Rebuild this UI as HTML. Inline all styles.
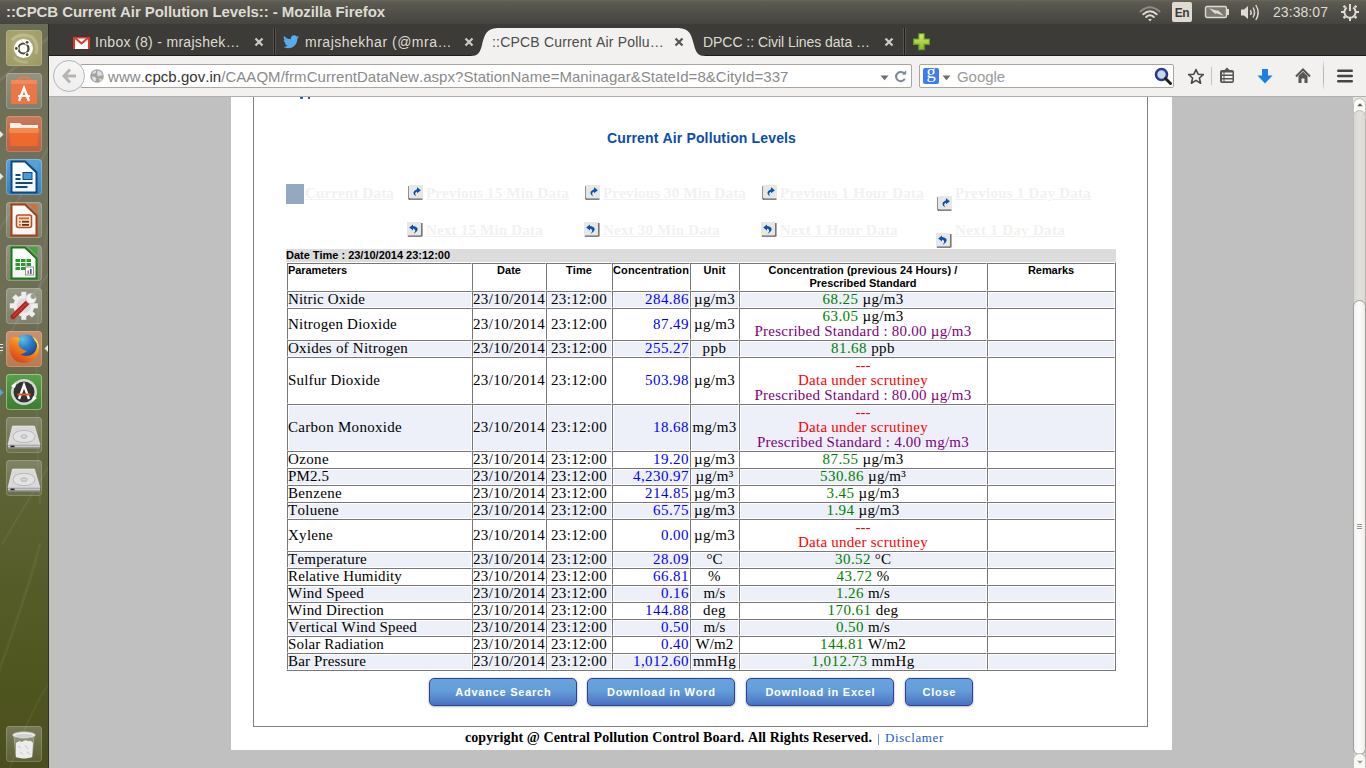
<!DOCTYPE html>
<html><head><meta charset="utf-8">
<style>
*{margin:0;padding:0;box-sizing:border-box}
html,body{width:1366px;height:768px;overflow:hidden;background:#c0c0c0;font-family:"Liberation Sans",sans-serif;position:relative;font-kerning:none}
.abs{position:absolute}
#panel{left:0;top:0;width:1366px;height:24px;background:linear-gradient(#4a4945,#3c3b37);color:#dfdbd2;font-size:15px;font-weight:bold;line-height:24px}
#launcher{left:0;top:24px;width:49px;height:744px;background:#5a5d34;border-right:1px solid #3b3d22}
#tabbar{left:49px;top:24px;width:1317px;height:31px;background:#3c3b37}
#navbar{left:49px;top:55px;width:1317px;height:42px;background:#f0efed;border-bottom:1px solid #b0ada6}
#page{left:231px;top:97px;width:941px;height:653px;background:#fff}
#box{left:253px;top:97px;width:895px;height:630px;border:1px solid #808080;border-top:0}
#scroll{left:1352px;top:97px;width:14px;height:671px;background:#dcdad5}
#title{left:607px;top:129px;color:#0a4db0;font-size:14px;font-weight:bold;line-height:18px;white-space:nowrap}
.lnk{position:absolute;font-family:"Liberation Serif",serif;font-weight:bold;font-size:15px;color:#f3f1ef;text-decoration:underline;line-height:18px;white-space:nowrap}
.ico{position:absolute;width:14px;height:14px;background:#e8e8e8}
#dtbar{left:286px;top:249px;width:830px;height:13px;background:#dcdcdc;font-size:11px;font-weight:bold;line-height:13px;padding-left:0;color:#000;white-space:nowrap}
#tbl{position:absolute;left:286px;top:262px;border-collapse:separate;border-spacing:0;table-layout:fixed;width:830px;border-style:solid;border-width:1px;border-color:#fff #777 #777 #fff}
#tbl td,#tbl th{border-style:solid;border-width:1px;border-color:#777 #fff #fff #777;padding:0;vertical-align:middle;font-family:"Liberation Serif",serif;font-size:15px;line-height:15px;white-space:nowrap;overflow:hidden;box-shadow:inset 1px 1px 0 #fff}
#tbl th{font-family:"Liberation Sans",sans-serif;font-size:11px;line-height:13px;font-weight:bold;vertical-align:top;text-align:center;height:28px}
#tbl tr.b td{background:#edf0f8}
#tbl td.c{text-align:center}
#tbl td.v{text-align:right;color:#00f}
.g{color:#008000}.r{color:#f00}.p{color:#800080}
.btn{position:absolute;top:678px;height:28px;border:1px solid #2c3f9e;border-radius:5px;box-shadow:0 0 2px rgba(60,50,30,0.3),0 1px 2px rgba(60,50,30,0.25);background:linear-gradient(#69a3dc 0%,#649ed9 45%,#4b72c0 100%);color:#fff;font-size:11px;font-weight:bold;letter-spacing:0.75px;text-indent:0.75px;text-align:center;line-height:26px}
#foot{left:465px;top:729px;font-family:"Liberation Serif",serif;font-size:14px;line-height:18px;white-space:nowrap}
</style></head><body>
<!-- top panel -->
<div class="abs" style="left:0;top:0;width:1366px;height:24px;background:linear-gradient(#6a685c 0px,#5d5b52 2px,#504f49 12px,#45443f 24px)"></div>
<div class="abs" style="left:6px;top:3px;color:#dfdbd2;font-size:15px;font-weight:bold;line-height:18px;white-space:nowrap"><span style="letter-spacing:-0.064px">::CPCB Current Air Pollution Levels:: - Mozilla Firefox</span></div>
<svg class="abs" style="left:1138px;top:4px" width="24" height="18" viewBox="0 0 24 18">
 <path d="M2.5 7.5 Q12 -1 21.5 7.5" stroke="#8d8b84" stroke-width="2" fill="none" stroke-linecap="round"/>
 <path d="M5.3 10.3 Q12 4.2 18.7 10.3" stroke="#dfdbd2" stroke-width="2" fill="none" stroke-linecap="round"/>
 <path d="M8.2 13 Q12 9.6 15.8 13" stroke="#dfdbd2" stroke-width="2" fill="none" stroke-linecap="round"/>
 <path d="M10 15 L14 15 L12 17.5 Z" fill="#dfdbd2"/>
</svg>
<div class="abs" style="left:1172px;top:2px;width:20px;height:20px;background:#dfdbd2;border-radius:2px;color:#3c3b37;font-size:12px;line-height:22px;text-align:center;letter-spacing:-0.5px;font-weight:bold">En</div>
<svg class="abs" style="left:1204px;top:5px" width="26" height="14" viewBox="0 0 26 14">
 <rect x="1.5" y="1.5" width="21" height="11" rx="1.5" fill="#7b7a72" stroke="#dfdbd2" stroke-width="1.4"/>
 <rect x="22.5" y="4" width="2.5" height="6" fill="#dfdbd2"/>
 <path d="M5.2 3.2 L13.8 6 L13 4.2 L19.8 10.8 L11.2 8 L12 9.8 Z" fill="#dfdbd2"/>
</svg>
<svg class="abs" style="left:1240px;top:3px" width="22" height="19" viewBox="0 0 22 19">
 <path d="M1 6.5 L4 6.5 L8 3 L8 16 L4 12.5 L1 12.5 Z" fill="#dfdbd2"/>
 <path d="M10.5 7 Q12 9.5 10.5 12" stroke="#dfdbd2" stroke-width="1.4" fill="none"/>
 <path d="M13 4.5 Q16 9.5 13 14.5" stroke="#dfdbd2" stroke-width="1.4" fill="none"/>
 <path d="M15.8 2 Q20.5 9.5 15.8 17" stroke="#dfdbd2" stroke-width="1.4" fill="none"/>
</svg>
<div class="abs" style="left:1273px;top:4px;color:#dfdbd2;font-size:14px;line-height:16px;white-space:nowrap"><span style="letter-spacing:0.063px">23:38:07</span></div>
<svg class="abs" style="left:1341px;top:3px" width="18" height="18" viewBox="0 0 18 18">
 <g fill="#dfdbd2">
 <rect x="8" y="15" width="2" height="3"/><rect x="0" y="8" width="3" height="2"/><rect x="15" y="8" width="3" height="2"/>
 <rect x="2.2" y="2.4" width="2.4" height="2.4" transform="rotate(45 3.4 3.6)"/><rect x="13.4" y="2.4" width="2.4" height="2.4" transform="rotate(45 14.6 3.6)"/>
 <rect x="2.2" y="13" width="2.4" height="2.4" transform="rotate(45 3.4 14.2)"/><rect x="13.4" y="13" width="2.4" height="2.4" transform="rotate(45 14.6 14.2)"/>
 <rect x="8" y="1" width="2" height="7"/>
 </g>
 <path d="M5.8 4.5 A5.6 5.6 0 1 0 12.2 4.5" stroke="#dfdbd2" stroke-width="2" fill="none"/>
</svg>

<!-- launcher -->
<div class="abs" style="left:0;top:24px;width:48px;height:744px;background:linear-gradient(#6c6d55 0px,#707159 150px,#6c6d52 300px,#63673f 420px,#5a6030 500px,#50561f 650px,#4a4e1f 744px)"></div>
<svg class="abs" style="left:0;top:24px" width="48" height="744" viewBox="0 0 48 744">
 <g fill="none" stroke="#fff" stroke-linecap="round">
  <path d="M-5 60 Q20 40 52 10" stroke-opacity="0.08" stroke-width="3"/>
  <path d="M-4 210 Q24 170 50 120" stroke-opacity="0.07" stroke-width="2"/>
  <path d="M0 330 Q18 290 48 250" stroke-opacity="0.08" stroke-width="2"/>
  <path d="M40 480 Q30 300 48 200" stroke-opacity="0.05" stroke-width="2"/>
  <path d="M2 520 Q26 480 50 440" stroke-opacity="0.06" stroke-width="2"/>
  <path d="M-2 650 Q30 560 40 520" stroke-opacity="0.05" stroke-width="3"/>
  <path d="M10 744 Q24 700 48 660" stroke-opacity="0.05" stroke-width="2"/>
 </g>
</svg>
<div class="abs" style="left:48px;top:24px;width:1px;height:744px;background:#2e2f1e"></div>
<div class="abs" style="left:6px;top:30px;width:36px;height:36px;border-radius:4px;background:radial-gradient(circle at 45% 40%,#b9b683 0,#a7a36f 45%,#9a965f 100%);box-shadow:inset 0 0 0 1px rgba(255,255,255,0.18)"></div><svg class="abs" style="left:6px;top:30px" width="36" height="36" viewBox="0 0 36 36"><path d="M6 10 Q14 2 26 7 Q33 14 30 24" stroke="rgba(255,255,255,0.22)" stroke-width="3" fill="none"/><path d="M8 27 Q12 33 22 32" stroke="rgba(255,255,255,0.18)" stroke-width="3" fill="none"/><circle cx="17.5" cy="18.5" r="9.4" fill="#fff"/><circle cx="17.5" cy="18.5" r="5" stroke="#4d4930" stroke-width="2.2" fill="none"/><circle cx="21.1" cy="12.3" r="2.5" fill="#fff"/><circle cx="10.3" cy="18.5" r="2.5" fill="#fff"/><circle cx="21.1" cy="24.7" r="2.5" fill="#fff"/><circle cx="21.1" cy="12.3" r="1.4" fill="#4d4930"/><circle cx="10.3" cy="18.5" r="1.4" fill="#4d4930"/><circle cx="21.1" cy="24.7" r="1.4" fill="#4d4930"/></svg>
<div class="abs" style="left:6px;top:73px;width:36px;height:36px;border-radius:4px;background:linear-gradient(rgba(255,255,255,0.26),rgba(255,255,255,0.12));box-shadow:inset 0 0 0 1px rgba(255,255,255,0.18)"></div><svg class="abs" style="left:6px;top:73px" width="36" height="36" viewBox="0 0 36 36"><path d="M12 8 Q12 4.5 18 4.5 Q24 4.5 24 8" stroke="#e77a4e" stroke-width="2.2" fill="none"/><rect x="5" y="7" width="26" height="24" fill="#ed7443"/><rect x="5" y="7" width="26" height="4" fill="#f08a5c"/><path d="M13 28 L18 15 L23 28" stroke="#fff" stroke-width="2.4" fill="none"/><rect x="12" y="22" width="12" height="2" fill="#fff"/></svg>
<div class="abs" style="left:6px;top:116px;width:36px;height:36px;border-radius:4px;background:linear-gradient(#c77a5a,#b7603f);box-shadow:inset 0 0 0 1px rgba(255,255,255,0.18)"></div><svg class="abs" style="left:6px;top:116px" width="36" height="36" viewBox="0 0 36 36"><path d="M4 7 L14 7 L16 9 L32 9 L32 14 L4 14 Z" fill="#f5efe8"/><path d="M3 12 L33 12 L31.5 30 L4.5 30 Z" fill="#ee6a2c"/><path d="M3 12 L33 12 L32.5 17 L3.5 17 Z" fill="#f5884c"/></svg>
<div class="abs" style="left:6px;top:159px;width:36px;height:36px;border-radius:4px;background:linear-gradient(#5aa0d6,#3b7fba);box-shadow:inset 0 0 0 1px rgba(255,255,255,0.25)"></div><svg class="abs" style="left:6px;top:159px" width="36" height="36" viewBox="0 0 36 36"><path d="M5.5 2.5 L19 2.5 L30.5 13.5 L30.5 33.5 L5.5 33.5 Z" fill="#f6f6f6" stroke="#0c4a80" stroke-width="2"/><path d="M7 4 L18.5 4 L29 14 L29 19 Q17 16 7 19 Z" fill="#fff" opacity="0.7"/><path d="M22.5 2 L31.5 2 L31.5 10.5 Z" fill="#5a9fd8"/><rect x="9.5" y="15" width="5" height="2" fill="#0c4a80"/><rect x="9.5" y="19" width="5" height="2" fill="#0c4a80"/><rect x="9.5" y="23" width="17" height="2" fill="#0c4a80"/><rect x="9.5" y="27" width="12" height="2" fill="#0c4a80"/><rect x="16.5" y="13" width="10" height="8" fill="#0c4a80"/><rect x="17.5" y="14" width="8" height="6" fill="#4a9ad8"/></svg>
<div class="abs" style="left:6px;top:202px;width:36px;height:36px;border-radius:4px;background:linear-gradient(rgba(255,255,255,0.26),rgba(255,255,255,0.12));box-shadow:inset 0 0 0 1px rgba(255,255,255,0.18)"></div><svg class="abs" style="left:6px;top:202px" width="36" height="36" viewBox="0 0 36 36"><path d="M5.5 2.5 L19 2.5 L30.5 13.5 L30.5 33.5 L5.5 33.5 Z" fill="#f6f6f6" stroke="#a63f14" stroke-width="2"/><path d="M7 4 L18.5 4 L29 14 L29 19 Q17 16 7 19 Z" fill="#fff" opacity="0.7"/><path d="M22.5 2 L31.5 2 L31.5 10.5 Z" fill="#d0703c"/><rect x="10.5" y="13" width="15" height="12.5" rx="2" fill="#fde6d4" stroke="#b5501e" stroke-width="1.6"/><rect x="13" y="15.5" width="10" height="1.8" fill="#d9601e"/><rect x="13" y="18.8" width="1.8" height="1.8" fill="#d9601e"/><rect x="16" y="18.8" width="7" height="1.8" fill="#7a2a08"/><rect x="13" y="22" width="1.8" height="1.8" fill="#d9601e"/><rect x="16" y="22" width="7" height="1.8" fill="#7a2a08"/></svg>
<div class="abs" style="left:6px;top:245px;width:36px;height:36px;border-radius:4px;background:linear-gradient(rgba(255,255,255,0.26),rgba(255,255,255,0.12));box-shadow:inset 0 0 0 1px rgba(255,255,255,0.18)"></div><svg class="abs" style="left:6px;top:245px" width="36" height="36" viewBox="0 0 36 36"><path d="M5.5 2.5 L19 2.5 L30.5 13.5 L30.5 33.5 L5.5 33.5 Z" fill="#f6f6f6" stroke="#187a18" stroke-width="2"/><path d="M7 4 L18.5 4 L29 14 L29 19 Q17 16 7 19 Z" fill="#fff" opacity="0.7"/><path d="M22.5 2 L31.5 2 L31.5 10.5 Z" fill="#3aaa3a"/><g fill="#2a9a2a"><rect x="9.5" y="14" width="4.5" height="3"/><rect x="15" y="14" width="4.5" height="3"/><rect x="20.5" y="14" width="4.5" height="3"/><rect x="9.5" y="18" width="4.5" height="3"/><rect x="15" y="18" width="4.5" height="3"/><rect x="20.5" y="18" width="4.5" height="3"/><rect x="9.5" y="22" width="4.5" height="3"/><rect x="15" y="22" width="4.5" height="3"/></g><rect x="19.5" y="22" width="8" height="8" fill="#fff" stroke="#777" stroke-width="0.8"/><rect x="21.5" y="25.5" width="1.6" height="3.5" fill="#e06020"/><rect x="24" y="24" width="1.6" height="5" fill="#2060c0"/></svg>
<div class="abs" style="left:6px;top:288px;width:36px;height:36px;border-radius:4px;background:linear-gradient(rgba(255,255,255,0.28),rgba(255,255,255,0.14));box-shadow:inset 0 0 0 1px rgba(255,255,255,0.18)"></div><svg class="abs" style="left:6px;top:288px" width="36" height="36" viewBox="0 0 36 36"><g fill="#ededed"><rect x="15.3" y="3.8" width="5" height="5" transform="rotate(0 17.8 17.8)"/><rect x="15.3" y="3.8" width="5" height="5" transform="rotate(45 17.8 17.8)"/><rect x="15.3" y="3.8" width="5" height="5" transform="rotate(90 17.8 17.8)"/><rect x="15.3" y="3.8" width="5" height="5" transform="rotate(135 17.8 17.8)"/><rect x="15.3" y="3.8" width="5" height="5" transform="rotate(180 17.8 17.8)"/><rect x="15.3" y="3.8" width="5" height="5" transform="rotate(225 17.8 17.8)"/><rect x="15.3" y="3.8" width="5" height="5" transform="rotate(270 17.8 17.8)"/><rect x="15.3" y="3.8" width="5" height="5" transform="rotate(315 17.8 17.8)"/><circle cx="17.8" cy="17.8" r="10.5"/></g><circle cx="17.8" cy="17.8" r="7.2" fill="#dadada"/><path d="M7 28.6 L21 15" stroke="#b02420" stroke-width="5.2" stroke-linecap="round"/><path d="M7.5 28 L20.5 15.5" stroke="#e04a40" stroke-width="1.6" stroke-linecap="round" opacity="0.6"/><circle cx="25" cy="10.5" r="5.2" fill="#f2f2f2" stroke="#bbb" stroke-width="0.6"/><circle cx="27.2" cy="8.3" r="2.6" fill="#9c9e8a"/></svg>
<div class="abs" style="left:6px;top:331px;width:36px;height:36px;border-radius:4px;background:linear-gradient(#c9936e,#b87a52);box-shadow:inset 0 0 0 1px rgba(255,255,255,0.18)"></div><svg class="abs" style="left:6px;top:331px" width="36" height="36" viewBox="0 0 36 36"><defs><radialGradient id="glb" cx="0.35" cy="0.2" r="0.9"><stop offset="0" stop-color="#5cc4f0"/><stop offset="0.45" stop-color="#2f7fc8"/><stop offset="1" stop-color="#1a3a88"/></radialGradient><linearGradient id="fox" x1="0.8" y1="0.2" x2="0.3" y2="1"><stop offset="0" stop-color="#ffd02a"/><stop offset="0.35" stop-color="#f58a1c"/><stop offset="1" stop-color="#d9401a"/></linearGradient></defs><circle cx="20" cy="14.5" r="11" fill="url(#glb)"/><path d="M5 7 C8 6 12 5.5 14.5 7.5 C12.5 10 12 13 13 15 C15 18 18 19.5 21 20 C19 22 16 23 14.5 23.5 C18 25.5 23 25.5 27 23 C30.5 20.5 31.5 16 31 12.5 C30 9 28 6.5 26 5.5 C30 7 33 11 32.7 17.5 C32.5 26 26 32 18 32 C10 32 3.5 26 3.5 17 C3.5 13 4 9.5 5 7 Z" fill="url(#fox)"/><path d="M26 5.5 C30 7 33 11 32.7 17.5 C32 14 31 12 29 10 C28.5 8.5 27.5 7 26 5.5 Z" fill="#ffe04a"/></svg>
<div class="abs" style="left:6px;top:374px;width:36px;height:36px;border-radius:4px;background:linear-gradient(#5aa048,#3e7c30);box-shadow:inset 0 0 0 1px rgba(230,230,200,0.5)"></div><svg class="abs" style="left:6px;top:374px" width="36" height="36" viewBox="0 0 36 36"><circle cx="18" cy="18" r="13" fill="#d8d8d8"/><circle cx="18" cy="18" r="10.5" fill="#333"/><path d="M13 25 L18 11 L23 25" stroke="#fff" stroke-width="2.4" fill="none"/><rect x="11.5" y="19.5" width="13" height="2" fill="#e05a28"/><path d="M5 12 L10 8 L9 14 Z M31 24 L26 28 L27 22 Z" fill="#fff"/></svg>
<div class="abs" style="left:6px;top:417px;width:36px;height:36px;border-radius:4px;background:linear-gradient(rgba(255,255,255,0.2),rgba(255,255,255,0.08));box-shadow:inset 0 0 0 1px rgba(255,255,255,0.18)"></div><svg class="abs" style="left:6px;top:417px" width="36" height="36" viewBox="0 0 36 36"><path d="M6.5 9 L28.5 9 L34 27.8 L2 27.8 Z" fill="#d9d9d9" stroke="#f4f4f4" stroke-width="0.6"/><ellipse cx="18" cy="19.5" rx="11" ry="6.2" stroke="#b4b4b4" stroke-width="0.9" fill="#e2e2e2"/><ellipse cx="18" cy="19.5" rx="3.2" ry="1.8" stroke="#aaa" stroke-width="0.8" fill="#d6d6d6"/><path d="M2 27.8 L34 27.8 L34 31.5 L2 31.5 Z" fill="#9a9a9a"/><path d="M2 28.6 L34 28.6 L34 30 L2 30 Z" fill="#c8c8c8"/><rect x="4.5" y="28.6" width="4" height="1.6" fill="#222"/></svg>
<div class="abs" style="left:6px;top:460px;width:36px;height:36px;border-radius:4px;background:linear-gradient(rgba(255,255,255,0.2),rgba(255,255,255,0.08));box-shadow:inset 0 0 0 1px rgba(255,255,255,0.18)"></div><svg class="abs" style="left:6px;top:460px" width="36" height="36" viewBox="0 0 36 36"><path d="M6.5 9 L28.5 9 L34 27.8 L2 27.8 Z" fill="#d9d9d9" stroke="#f4f4f4" stroke-width="0.6"/><ellipse cx="18" cy="19.5" rx="11" ry="6.2" stroke="#b4b4b4" stroke-width="0.9" fill="#e2e2e2"/><ellipse cx="18" cy="19.5" rx="3.2" ry="1.8" stroke="#aaa" stroke-width="0.8" fill="#d6d6d6"/><path d="M2 27.8 L34 27.8 L34 31.5 L2 31.5 Z" fill="#9a9a9a"/><path d="M2 28.6 L34 28.6 L34 30 L2 30 Z" fill="#c8c8c8"/><rect x="4.5" y="28.6" width="4" height="1.6" fill="#222"/></svg>
<div class="abs" style="left:6px;top:726px;width:36px;height:36px;border-radius:4px;background:linear-gradient(rgba(255,255,255,0.24),rgba(255,255,255,0.1));box-shadow:inset 0 0 0 1px rgba(255,255,255,0.18)"></div><svg class="abs" style="left:6px;top:726px" width="36" height="36" viewBox="0 0 36 36"><path d="M8 10 L10 31 Q18 34 26 31 L28 10 Z" fill="rgba(255,255,255,0.22)" stroke="rgba(255,255,255,0.4)" stroke-width="0.8"/><path d="M10 17 Q13 14 16 16 Q19 13 22 15 Q25 14 27 17 L26 31 Q18 33.5 10 31 Z" fill="#ececec"/><path d="M12 20 L15 22 M19 19 L22 23 M14 26 L17 28 M21 26 L24 28" stroke="#bbb" stroke-width="0.8"/><ellipse cx="18" cy="9" rx="11.5" ry="3.2" fill="#f0f0f0" stroke="#aaa" stroke-width="0.8"/><ellipse cx="18" cy="9.6" rx="9" ry="1.8" fill="#d0d0d0"/></svg>
<svg class="abs" style="left:0;top:131px" width="4" height="7"><path d="M0 0 L3.5 3.5 L0 7 Z" fill="#e6e6e6"/></svg>
<svg class="abs" style="left:0;top:173px" width="4" height="7"><path d="M0 0 L3.5 3.5 L0 7 Z" fill="#e6e6e6"/></svg>
<div class="abs" style="left:0;top:344px;width:3px;height:1px;background:#e6e6e6;box-shadow:0 3px 0 #e6e6e6,0 6px 0 #e6e6e6"></div>
<svg class="abs" style="left:44px;top:345px" width="4" height="7"><path d="M4 0 L0.5 3.5 L4 7 Z" fill="#e6e6e6"/></svg>
<svg class="abs" style="left:0;top:389px" width="4" height="7"><path d="M0 0 L3.5 3.5 L0 7 Z" fill="#4aa8e0"/></svg>

<!-- tab bar -->
<div class="abs" style="left:49px;top:24px;width:1317px;height:31px;background:#3c3b37"></div>
<div class="abs" style="left:49px;top:55px;width:1317px;height:1px;background:#1e1d1b"></div>
<!-- tab separators -->
<div class="abs" style="left:273px;top:28px;width:3px;height:27px;background:linear-gradient(90deg,#55544f 0,#55544f 33%,#1e1d1b 33%,#1e1d1b 66%,#55544f 66%)"></div>
<div class="abs" style="left:903px;top:28px;width:3px;height:27px;background:linear-gradient(90deg,#55544f 0,#55544f 33%,#1e1d1b 33%,#1e1d1b 66%,#55544f 66%)"></div>
<!-- active tab -->
<svg class="abs" style="left:470px;top:27px" width="236" height="29" viewBox="0 0 236 29">
 <path d="M0 29 C8 29 10 26 12 18 C15 6 17 1 30 1 L206 1 C219 1 221 6 224 18 C226 26 228 29 236 29 Z" fill="#f2f1f0"/>
</svg>
<!-- gmail icon -->
<svg class="abs" style="left:73px;top:37px" width="17" height="12" viewBox="0 0 17 12">
 <rect x="0" y="0" width="17" height="12" fill="#e0342c"/>
 <rect x="2" y="1.5" width="13" height="10.5" fill="#fff"/>
 <path d="M1.5 0.5 L8.5 6.5 L15.5 0.5" stroke="#e0342c" stroke-width="2" fill="none"/>
</svg>
<div class="abs" style="left:95px;top:34px;color:#dfdbd2;font-size:14px;line-height:17px;white-space:nowrap"><span style="letter-spacing:0.310px">Inbox (8) - mrajshek…</span></div>
<svg class="abs tabx" style="left:254px;top:37px" width="10" height="10" viewBox="0 0 10 10"><path d="M1.5 1.5 L8.5 8.5 M8.5 1.5 L1.5 8.5" stroke="#cfccc5" stroke-width="2.2"/></svg>
<!-- twitter icon -->
<svg class="abs" style="left:283px;top:35px" width="16" height="14" viewBox="0 0 24 20">
 <path d="M24 2.4c-.9.4-1.8.6-2.8.8 1-.6 1.8-1.6 2.2-2.7-1 .6-2 1-3.1 1.2C19.4.7 18.1 0 16.6 0c-2.7 0-4.9 2.2-4.9 4.9 0 .4 0 .8.1 1.1C7.7 5.8 4.1 3.9 1.7.9c-.4.7-.7 1.6-.7 2.5 0 1.7.9 3.2 2.2 4.1-.8 0-1.6-.2-2.2-.6v.1c0 2.4 1.7 4.4 3.9 4.8-.4.1-.8.2-1.3.2-.3 0-.6 0-.9-.1.6 2 2.4 3.4 4.6 3.4-1.7 1.3-3.8 2.1-6.1 2.1-.4 0-.8 0-1.2-.1 2.2 1.4 4.8 2.2 7.5 2.2 9.1 0 14-7.5 14-14v-.6c1-.7 1.8-1.6 2.5-2.5z" fill="#55acee"/>
</svg>
<div class="abs" style="left:305px;top:34px;color:#dfdbd2;font-size:14px;line-height:17px;white-space:nowrap"><span style="letter-spacing:0.505px">mrajshekhar (@mra…</span></div>
<svg class="abs" style="left:464px;top:37px" width="10" height="10" viewBox="0 0 10 10"><path d="M1.5 1.5 L8.5 8.5 M8.5 1.5 L1.5 8.5" stroke="#cfccc5" stroke-width="2.2"/></svg>
<div class="abs" style="left:492px;top:34px;color:#4c4c4a;font-size:14px;line-height:17px;white-space:nowrap"><span style="letter-spacing:0.189px">::CPCB Current Air Pollu…</span></div>
<svg class="abs" style="left:674px;top:37px" width="10" height="10" viewBox="0 0 10 10"><path d="M1.5 1.5 L8.5 8.5 M8.5 1.5 L1.5 8.5" stroke="#555" stroke-width="2.2"/></svg>
<div class="abs" style="left:703px;top:34px;color:#dfdbd2;font-size:14px;line-height:17px;white-space:nowrap"><span style="letter-spacing:-0.041px">DPCC :: Civil Lines data …</span></div>
<svg class="abs" style="left:884px;top:37px" width="10" height="10" viewBox="0 0 10 10"><path d="M1.5 1.5 L8.5 8.5 M8.5 1.5 L1.5 8.5" stroke="#cfccc5" stroke-width="2.2"/></svg>
<!-- new tab plus -->
<svg class="abs" style="left:913px;top:33px" width="18" height="18" viewBox="0 0 18 18">
 <defs><linearGradient id="plg" x1="0" y1="0" x2="0" y2="1"><stop offset="0" stop-color="#d8ec60"/><stop offset="1" stop-color="#8ab82a"/></linearGradient></defs>
 <path d="M5.8 0.8 L11.2 0.8 L11.2 6 L16.4 6 L16.4 11.4 L11.2 11.4 L11.2 16.6 L5.8 16.6 L5.8 11.4 L0.6 11.4 L0.6 6 L5.8 6 Z" fill="url(#plg)" stroke="#5da02a" stroke-width="1.1"/>
</svg>
<!-- nav bar -->
<div class="abs" style="left:49px;top:56px;width:1317px;height:40px;background:#f2f1f0"></div>
<div class="abs" style="left:49px;top:96px;width:1317px;height:1px;background:#b3afa8"></div>
<!-- url bar -->
<div class="abs" style="left:80px;top:64px;width:832px;height:24px;background:#fff;border:1px solid #aaa59d;border-radius:2px"></div>
<div class="abs" style="left:53px;top:60px;width:32px;height:32px;border-radius:50%;background:linear-gradient(#f7f6f5,#efeeec);border:1px solid #a9b7c6"></div>
<svg class="abs" style="left:62px;top:68px" width="15" height="16" viewBox="0 0 15 16">
 <path d="M8 1.5 L2 8 L8 14.5 M2.5 8 L14 8" stroke="#b5b5b5" stroke-width="3" fill="none" stroke-linejoin="miter"/>
</svg>
<svg class="abs" style="left:90px;top:69px" width="14" height="14" viewBox="0 0 14 14">
 <circle cx="7" cy="7" r="6.8" fill="#a2a2a2"/>
 <path d="M2 4.5 Q3.5 1.6 6.2 1.2 L6 3.6 Q4.2 5.4 2 4.5 Z M7.6 1.4 Q11.5 2 12.8 6.2 L11 6.8 Q9.6 5.8 8.8 7.4 Q6.8 7 7.2 4.6 Z M2.2 7.6 Q5 7 6.4 9.2 Q6.2 12 4.6 12.6 Q1.6 10.8 2.2 7.6 Z M9.2 9.6 Q11 9 12 10.6 L10 12.8 Q9.4 11 9.2 9.6 Z" fill="#dedede"/>
</svg>
<div class="abs" style="left:108px;top:68px;font-size:15px;line-height:18px;white-space:nowrap;color:#8a8a8a"><span style="letter-spacing:0.044px">www.<span style="color:#333">cpcb.gov.in</span>/CAAQM/frmCurrentDataNew.aspx?StationName=Maninagar&amp;StateId=8&amp;CityId=337</span></div>
<svg class="abs" style="left:880px;top:75px" width="9" height="6" viewBox="0 0 9 6"><path d="M0.5 0.5 L8.5 0.5 L4.5 5.3 Z" fill="#6c6c6c"/></svg>
<svg class="abs" style="left:894px;top:69px" width="14" height="14" viewBox="0 0 14 14">
 <path d="M10.6 5.2 A4.6 4.6 0 1 0 10.8 9.6" stroke="#7d8a96" stroke-width="2.1" fill="none"/>
 <path d="M8 5.6 L12.2 5.6 L12.2 1.2 Z" fill="#7d8a96"/>
</svg>
<!-- search box -->
<div class="abs" style="left:919px;top:64px;width:255px;height:24px;background:#fff;border:1px solid #aaa59d;border-radius:2px"></div>
<svg class="abs" style="left:923px;top:68px" width="16" height="16" viewBox="0 0 16 16"><rect width="16" height="16" rx="2" fill="#3d7cf2"/><text x="8.2" y="10.4" text-anchor="middle" font-family="Liberation Serif" font-size="18.5" fill="#fff">g</text></svg>
<svg class="abs" style="left:942px;top:75px" width="9" height="6" viewBox="0 0 9 6"><path d="M0.5 0.5 L8.5 0.5 L4.5 5.3 Z" fill="#6c6c6c"/></svg>
<div class="abs" style="left:957px;top:68px;font-size:15px;line-height:18px;color:#9a9a9a;white-space:nowrap"><span style="letter-spacing:-0.062px">Google</span></div>
<svg class="abs" style="left:1154px;top:67px" width="18" height="18" viewBox="0 0 18 18">
 <circle cx="7.5" cy="7.5" r="5.5" stroke="#2a3b8f" stroke-width="2.6" fill="#c8d8f0"/>
 <path d="M11.5 11.5 L16.5 16.5" stroke="#222" stroke-width="3" stroke-linecap="round"/>
</svg>
<!-- right toolbar icons -->
<svg class="abs" style="left:1187px;top:68px" width="18" height="17" viewBox="0 0 18 17">
 <path d="M9 1.5 L11.1 6.2 L16.3 6.6 L12.4 10 L13.6 15.2 L9 12.4 L4.4 15.2 L5.6 10 L1.7 6.6 L6.9 6.2 Z" stroke="#4a4a4a" stroke-width="1.6" fill="none" stroke-linejoin="round"/>
</svg>
<div class="abs" style="left:1211px;top:67px;width:1px;height:18px;background:#c5c2bc"></div>
<svg class="abs" style="left:1219px;top:67px" width="16" height="17" viewBox="0 0 16 17">
 <path d="M8 0.5 L10.5 3 L5.5 3 Z" fill="#555"/>
 <rect x="1" y="3" width="14" height="13" rx="2" fill="#555"/>
 <rect x="5.5" y="5.5" width="8" height="2" fill="#f2f1f0"/><rect x="5.5" y="9" width="8" height="2" fill="#f2f1f0"/><rect x="5.5" y="12.5" width="8" height="1.8" fill="#f2f1f0"/>
 <rect x="3" y="5.5" width="1.5" height="2" fill="#f2f1f0"/><rect x="3" y="9" width="1.5" height="2" fill="#f2f1f0"/><rect x="3" y="12.5" width="1.5" height="1.8" fill="#f2f1f0"/>
</svg>
<svg class="abs" style="left:1257px;top:69px" width="16" height="15" viewBox="0 0 16 15">
 <path d="M5 0 L11 0 L11 6.5 L15.5 6.5 L8 14.5 L0.5 6.5 L5 6.5 Z" fill="#1a7fe6"/>
</svg>
<svg class="abs" style="left:1295px;top:68px" width="16" height="16" viewBox="0 0 16 16">
 <path d="M1 8.5 L8 1.5 L15 8.5" stroke="#555" stroke-width="2" fill="none"/>
 <path d="M3.5 8 L8 3.8 L12.5 8 L12.5 15 L9.5 15 L9.5 10.5 L6.5 10.5 L6.5 15 L3.5 15 Z" fill="#555"/>
</svg>
<div class="abs" style="left:1323px;top:59px;width:1px;height:32px;background:linear-gradient(rgba(180,190,200,0),#b0bac4 30%,#b0bac4 70%,rgba(180,190,200,0))"></div>
<svg class="abs" style="left:1336px;top:68px" width="18" height="16" viewBox="0 0 18 16">
 <rect x="1" y="1.5" width="16" height="2.4" rx="1.2" fill="#444"/><rect x="1" y="6.8" width="16" height="2.4" rx="1.2" fill="#444"/><rect x="1" y="12.1" width="16" height="2.4" rx="1.2" fill="#444"/>
</svg>

<!-- content background -->
<div class="abs" style="left:49px;top:97px;width:1303px;height:671px;background:#c0c0c0"></div>
<!-- scrollbar -->
<div class="abs" style="left:1353px;top:97px;width:13px;height:671px;background:#e6e4e1"></div>
<div class="abs" style="left:1353px;top:98px;width:13px;height:16px;border-radius:6.5px 6.5px 0 0;background:#fbfbfa;border:1px solid #c2beb7;border-bottom:0"></div>
<div class="abs" style="left:1353px;top:110px;width:13px;height:664px;border-radius:6.5px;background:linear-gradient(90deg,#d9d7d3,#e2e0dd 50%,#dad8d4);border:1px solid #bfbbb4"></div>
<svg class="abs" style="left:1356px;top:102px" width="8" height="5" viewBox="0 0 8 5"><path d="M1.2 4.3 L6.8 4.3 L4 1.3 Z" fill="#5a5a5a"/></svg>
<div class="abs" style="left:1353px;top:300px;width:13px;height:455px;border-radius:6.5px;background:linear-gradient(90deg,#f3f3f2,#fdfdfd 45%,#eeedeb);border:1px solid #a29e97"></div>
<div class="abs" style="left:1357px;top:524px;width:5px;height:1px;background:#9a9791;box-shadow:0 2px 0 #9a9791,0 4px 0 #9a9791"></div>
<div class="abs" style="left:1353px;top:753px;width:13px;height:16px;border-radius:6.5px 6.5px 0 0;background:#f8f8f7;border:1px solid #c2beb7;border-bottom:0"></div>
<svg class="abs" style="left:1356px;top:760px" width="8" height="5" viewBox="0 0 8 5"><path d="M1.2 0.7 L6.8 0.7 L4 3.7 Z" fill="#9a9a9a"/></svg>

<div id="page" class="abs"></div>
<div id="box" class="abs"></div>
<div id="title" class="abs"><span style="letter-spacing:0.138px">Current Air Pollution Levels</span></div>

<div class="abs" style="left:286px;top:184px;width:18px;height:20px;background:#94a8c0"></div>
<div class="lnk" style="left:305px;top:184px"><span style="letter-spacing:0.161px">Current Data</span></div>
<svg class="abs" style="left:408px;top:185px" width="17" height="17" viewBox="-1 0 17 17"><rect x="-0.8" y="1" width="1.8" height="13.5" fill="#555" opacity="0.8"/><rect x="0" y="13.2" width="13.5" height="1.7" fill="#555" opacity="0.8"/><rect x="0" y="0" width="14" height="13.2" rx="0.8" fill="#e7e7e7"/><path d="M7.6 11.6 C4.2 9.8 2.4 6.8 8.6 4.1 L8.6 6.6 C5.8 7.4 5.4 9.2 7.6 11.6 Z" fill="#0b52a8"/><path d="M8 2.3 L11.9 5.3 L8 8.3 Z" fill="#0b52a8"/></svg><div class="lnk" style="left:426px;top:184px"><span style="letter-spacing:0.171px">Previous 15 Min Data</span></div>
<svg class="abs" style="left:585px;top:185px" width="17" height="17" viewBox="-1 0 17 17"><rect x="-0.8" y="1" width="1.8" height="13.5" fill="#555" opacity="0.8"/><rect x="0" y="13.2" width="13.5" height="1.7" fill="#555" opacity="0.8"/><rect x="0" y="0" width="14" height="13.2" rx="0.8" fill="#e7e7e7"/><path d="M7.6 11.6 C4.2 9.8 2.4 6.8 8.6 4.1 L8.6 6.6 C5.8 7.4 5.4 9.2 7.6 11.6 Z" fill="#0b52a8"/><path d="M8 2.3 L11.9 5.3 L8 8.3 Z" fill="#0b52a8"/></svg><div class="lnk" style="left:603px;top:184px"><span style="letter-spacing:0.171px">Previous 30 Min Data</span></div>
<svg class="abs" style="left:762px;top:185px" width="17" height="17" viewBox="-1 0 17 17"><rect x="-0.8" y="1" width="1.8" height="13.5" fill="#555" opacity="0.8"/><rect x="0" y="13.2" width="13.5" height="1.7" fill="#555" opacity="0.8"/><rect x="0" y="0" width="14" height="13.2" rx="0.8" fill="#e7e7e7"/><path d="M7.6 11.6 C4.2 9.8 2.4 6.8 8.6 4.1 L8.6 6.6 C5.8 7.4 5.4 9.2 7.6 11.6 Z" fill="#0b52a8"/><path d="M8 2.3 L11.9 5.3 L8 8.3 Z" fill="#0b52a8"/></svg><div class="lnk" style="left:780px;top:184px"><span style="letter-spacing:0.221px">Previous 1 Hour Data</span></div>
<svg class="abs" style="left:937px;top:196px" width="17" height="17" viewBox="-1 0 17 17"><rect x="-0.8" y="1" width="1.8" height="13.5" fill="#555" opacity="0.8"/><rect x="0" y="13.2" width="13.5" height="1.7" fill="#555" opacity="0.8"/><rect x="0" y="0" width="14" height="13.2" rx="0.8" fill="#e7e7e7"/><path d="M7.6 11.6 C4.2 9.8 2.4 6.8 8.6 4.1 L8.6 6.6 C5.8 7.4 5.4 9.2 7.6 11.6 Z" fill="#0b52a8"/><path d="M8 2.3 L11.9 5.3 L8 8.3 Z" fill="#0b52a8"/></svg><div class="lnk" style="left:955px;top:184px"><span style="letter-spacing:0.251px">Previous 1 Day Data</span></div>
<svg class="abs" style="left:407px;top:222px" width="17" height="17" viewBox="0 0 17 17"><rect x="13.8" y="1" width="1.8" height="13.5" fill="#555" opacity="0.8"/><rect x="0.8" y="13.2" width="13.5" height="1.7" fill="#555" opacity="0.8"/><rect x="0" y="0" width="14" height="13.2" rx="0.8" fill="#e7e7e7"/><path d="M5.4 4.1 C11.8 4.4 12.6 8.6 6.6 11.9 C9 9.2 8.8 7.2 5.4 6.6 Z" fill="#0b52a8"/><path d="M2.2 5.4 L6 2.4 L6 8.4 Z" fill="#0b52a8"/></svg><div class="lnk" style="left:426px;top:221px"><span style="letter-spacing:0.204px">Next 15 Min Data</span></div>
<svg class="abs" style="left:584px;top:222px" width="17" height="17" viewBox="0 0 17 17"><rect x="13.8" y="1" width="1.8" height="13.5" fill="#555" opacity="0.8"/><rect x="0.8" y="13.2" width="13.5" height="1.7" fill="#555" opacity="0.8"/><rect x="0" y="0" width="14" height="13.2" rx="0.8" fill="#e7e7e7"/><path d="M5.4 4.1 C11.8 4.4 12.6 8.6 6.6 11.9 C9 9.2 8.8 7.2 5.4 6.6 Z" fill="#0b52a8"/><path d="M2.2 5.4 L6 2.4 L6 8.4 Z" fill="#0b52a8"/></svg><div class="lnk" style="left:603px;top:221px"><span style="letter-spacing:0.204px">Next 30 Min Data</span></div>
<svg class="abs" style="left:761px;top:222px" width="17" height="17" viewBox="0 0 17 17"><rect x="13.8" y="1" width="1.8" height="13.5" fill="#555" opacity="0.8"/><rect x="0.8" y="13.2" width="13.5" height="1.7" fill="#555" opacity="0.8"/><rect x="0" y="0" width="14" height="13.2" rx="0.8" fill="#e7e7e7"/><path d="M5.4 4.1 C11.8 4.4 12.6 8.6 6.6 11.9 C9 9.2 8.8 7.2 5.4 6.6 Z" fill="#0b52a8"/><path d="M2.2 5.4 L6 2.4 L6 8.4 Z" fill="#0b52a8"/></svg><div class="lnk" style="left:780px;top:221px"><span style="letter-spacing:0.267px">Next 1 Hour Data</span></div>
<svg class="abs" style="left:936px;top:233px" width="17" height="17" viewBox="0 0 17 17"><rect x="13.8" y="1" width="1.8" height="13.5" fill="#555" opacity="0.8"/><rect x="0.8" y="13.2" width="13.5" height="1.7" fill="#555" opacity="0.8"/><rect x="0" y="0" width="14" height="13.2" rx="0.8" fill="#e7e7e7"/><path d="M5.4 4.1 C11.8 4.4 12.6 8.6 6.6 11.9 C9 9.2 8.8 7.2 5.4 6.6 Z" fill="#0b52a8"/><path d="M2.2 5.4 L6 2.4 L6 8.4 Z" fill="#0b52a8"/></svg><div class="lnk" style="left:955px;top:221px"><span style="letter-spacing:0.307px">Next 1 Day Data</span></div>

<div id="dtbar" class="abs"><span style="letter-spacing:-0.016px">Date Time : 23/10/2014 23:12:00</span></div>
<table id="tbl">
<colgroup><col style="width:185px"><col style="width:74px"><col style="width:66px"><col style="width:78px"><col style="width:49px"><col style="width:248px"><col style="width:128px"></colgroup>
<tr><th style="text-align:left"><span style="letter-spacing:-0.093px">Parameters</span></th><th><span style="letter-spacing:0.039px">Date</span></th><th><span style="letter-spacing:0.082px">Time</span></th><th><span style="letter-spacing:0.111px">Concentration</span></th><th><span style="letter-spacing:0.154px">Unit</span></th><th><span style="letter-spacing:0.056px">Concentration (previous 24 Hours) /</span><br><span style="letter-spacing:-0.031px">Prescribed Standard</span></th><th><span style="letter-spacing:-0.068px">Remarks</span></th></tr>
<tr class="b"><td class="pl"><span style="letter-spacing:0.134px">Nitric Oxide</span></td><td><span style="letter-spacing:0.367px">23/10/2014</span></td><td class="c"><span style="letter-spacing:0.333px">23:12:00</span></td><td class="v"><span style="letter-spacing:0.458px">284.86</span></td><td class="c"><span style="letter-spacing:0.304px">µg/m3</span></td><td class="c"><span class="g"><span style="letter-spacing:0.450px">68.25</span></span><span style="letter-spacing:0.295px"> µg/m3</span></td><td></td></tr>
<tr class="w"><td class="pl"><span style="letter-spacing:0.225px">Nitrogen Dioxide</span></td><td><span style="letter-spacing:0.367px">23/10/2014</span></td><td class="c"><span style="letter-spacing:0.333px">23:12:00</span></td><td class="v"><span style="letter-spacing:0.450px">87.49</span></td><td class="c"><span style="letter-spacing:0.304px">µg/m3</span></td><td class="c"><span class="g"><span style="letter-spacing:0.450px">63.05</span></span><span style="letter-spacing:0.295px"> µg/m3</span><br><span class="p"><span style="letter-spacing:0.242px">Prescribed Standard : 80.00 µg/m3</span></span></td><td></td></tr>
<tr class="b"><td class="pl"><span style="letter-spacing:0.233px">Oxides of Nitrogen</span></td><td><span style="letter-spacing:0.367px">23/10/2014</span></td><td class="c"><span style="letter-spacing:0.333px">23:12:00</span></td><td class="v"><span style="letter-spacing:0.458px">255.27</span></td><td class="c"><span style="letter-spacing:0.500px">ppb</span></td><td class="c"><span class="g"><span style="letter-spacing:0.450px">81.68</span></span><span style="letter-spacing:0.438px"> ppb</span></td><td></td></tr>
<tr class="w"><td class="pl"><span style="letter-spacing:0.173px">Sulfur Dioxide</span></td><td><span style="letter-spacing:0.367px">23/10/2014</span></td><td class="c"><span style="letter-spacing:0.333px">23:12:00</span></td><td class="v"><span style="letter-spacing:0.458px">503.98</span></td><td class="c"><span style="letter-spacing:0.304px">µg/m3</span></td><td class="c"><span class="r"><span style="letter-spacing:0.005px">---</span></span><br><span class="r"><span style="letter-spacing:0.252px">Data under scrutiney</span></span><br><span class="p"><span style="letter-spacing:0.242px">Prescribed Standard : 80.00 µg/m3</span></span></td><td></td></tr>
<tr class="b"><td class="pl"><span style="letter-spacing:0.295px">Carbon Monoxide</span></td><td><span style="letter-spacing:0.367px">23/10/2014</span></td><td class="c"><span style="letter-spacing:0.333px">23:12:00</span></td><td class="v"><span style="letter-spacing:0.450px">18.68</span></td><td class="c"><span style="letter-spacing:0.300px">mg/m3</span></td><td class="c"><span class="r"><span style="letter-spacing:0.005px">---</span></span><br><span class="r"><span style="letter-spacing:0.252px">Data under scrutiney</span></span><br><span class="p"><span style="letter-spacing:0.233px">Prescribed Standard : 4.00 mg/m3</span></span></td><td></td></tr>
<tr class="w"><td class="pl"><span style="letter-spacing:0.370px">Ozone</span></td><td><span style="letter-spacing:0.367px">23/10/2014</span></td><td class="c"><span style="letter-spacing:0.333px">23:12:00</span></td><td class="v"><span style="letter-spacing:0.450px">19.20</span></td><td class="c"><span style="letter-spacing:0.304px">µg/m3</span></td><td class="c"><span class="g"><span style="letter-spacing:0.450px">87.55</span></span><span style="letter-spacing:0.295px"> µg/m3</span></td><td></td></tr>
<tr class="b"><td class="pl"><span style="letter-spacing:0.114px">PM2.5</span></td><td><span style="letter-spacing:0.367px">23/10/2014</span></td><td class="c"><span style="letter-spacing:0.333px">23:12:00</span></td><td class="v"><span style="letter-spacing:0.438px">4,230.97</span></td><td class="c"><span style="letter-spacing:0.305px">µg/m³</span></td><td class="c"><span class="g"><span style="letter-spacing:0.458px">530.86</span></span><span style="letter-spacing:0.296px"> µg/m³</span></td><td></td></tr>
<tr class="w"><td class="pl"><span style="letter-spacing:0.338px">Benzene</span></td><td><span style="letter-spacing:0.367px">23/10/2014</span></td><td class="c"><span style="letter-spacing:0.333px">23:12:00</span></td><td class="v"><span style="letter-spacing:0.458px">214.85</span></td><td class="c"><span style="letter-spacing:0.304px">µg/m3</span></td><td class="c"><span class="g"><span style="letter-spacing:0.438px">3.45</span></span><span style="letter-spacing:0.295px"> µg/m3</span></td><td></td></tr>
<tr class="b"><td class="pl"><span style="letter-spacing:0.265px">Toluene</span></td><td><span style="letter-spacing:0.367px">23/10/2014</span></td><td class="c"><span style="letter-spacing:0.333px">23:12:00</span></td><td class="v"><span style="letter-spacing:0.450px">65.75</span></td><td class="c"><span style="letter-spacing:0.304px">µg/m3</span></td><td class="c"><span class="g"><span style="letter-spacing:0.438px">1.94</span></span><span style="letter-spacing:0.295px"> µg/m3</span></td><td></td></tr>
<tr class="w"><td class="pl"><span style="letter-spacing:0.281px">Xylene</span></td><td><span style="letter-spacing:0.367px">23/10/2014</span></td><td class="c"><span style="letter-spacing:0.333px">23:12:00</span></td><td class="v"><span style="letter-spacing:0.438px">0.00</span></td><td class="c"><span style="letter-spacing:0.304px">µg/m3</span></td><td class="c"><span class="r"><span style="letter-spacing:0.005px">---</span></span><br><span class="r"><span style="letter-spacing:0.252px">Data under scrutiney</span></span></td><td></td></tr>
<tr class="b"><td class="pl"><span style="letter-spacing:0.216px">Temperature</span></td><td><span style="letter-spacing:0.367px">23/10/2014</span></td><td class="c"><span style="letter-spacing:0.333px">23:12:00</span></td><td class="v"><span style="letter-spacing:0.450px">28.09</span></td><td class="c"><span style="letter-spacing:-0.002px">°C</span></td><td class="c"><span class="g"><span style="letter-spacing:0.450px">30.52</span></span><span style="letter-spacing:0.082px"> °C</span></td><td></td></tr>
<tr class="w"><td class="pl"><span style="letter-spacing:0.163px">Relative Humidity</span></td><td><span style="letter-spacing:0.367px">23/10/2014</span></td><td class="c"><span style="letter-spacing:0.333px">23:12:00</span></td><td class="v"><span style="letter-spacing:0.450px">66.81</span></td><td class="c"><span style="letter-spacing:0.505px">%</span></td><td class="c"><span class="g"><span style="letter-spacing:0.450px">43.72</span></span><span style="letter-spacing:0.377px"> %</span></td><td></td></tr>
<tr class="b"><td class="pl"><span style="letter-spacing:0.227px">Wind Speed</span></td><td><span style="letter-spacing:0.367px">23/10/2014</span></td><td class="c"><span style="letter-spacing:0.333px">23:12:00</span></td><td class="v"><span style="letter-spacing:0.438px">0.16</span></td><td class="c"><span style="letter-spacing:0.109px">m/s</span></td><td class="c"><span class="g"><span style="letter-spacing:0.438px">1.26</span></span><span style="letter-spacing:0.144px"> m/s</span></td><td></td></tr>
<tr class="w"><td class="pl"><span style="letter-spacing:0.163px">Wind Direction</span></td><td><span style="letter-spacing:0.367px">23/10/2014</span></td><td class="c"><span style="letter-spacing:0.333px">23:12:00</span></td><td class="v"><span style="letter-spacing:0.458px">144.88</span></td><td class="c"><span style="letter-spacing:0.447px">deg</span></td><td class="c"><span class="g"><span style="letter-spacing:0.458px">170.61</span></span><span style="letter-spacing:0.398px"> deg</span></td><td></td></tr>
<tr class="b"><td class="pl"><span style="letter-spacing:0.169px">Vertical Wind Speed</span></td><td><span style="letter-spacing:0.367px">23/10/2014</span></td><td class="c"><span style="letter-spacing:0.333px">23:12:00</span></td><td class="v"><span style="letter-spacing:0.438px">0.50</span></td><td class="c"><span style="letter-spacing:0.109px">m/s</span></td><td class="c"><span class="g"><span style="letter-spacing:0.438px">0.50</span></span><span style="letter-spacing:0.144px"> m/s</span></td><td></td></tr>
<tr class="w"><td class="pl"><span style="letter-spacing:0.151px">Solar Radiation</span></td><td><span style="letter-spacing:0.367px">23/10/2014</span></td><td class="c"><span style="letter-spacing:0.333px">23:12:00</span></td><td class="v"><span style="letter-spacing:0.438px">0.40</span></td><td class="c"><span style="letter-spacing:0.127px">W/m2</span></td><td class="c"><span class="g"><span style="letter-spacing:0.458px">144.81</span></span><span style="letter-spacing:0.151px"> W/m2</span></td><td></td></tr>
<tr class="b"><td class="pl"><span style="letter-spacing:0.147px">Bar Pressure</span></td><td><span style="letter-spacing:0.367px">23/10/2014</span></td><td class="c"><span style="letter-spacing:0.333px">23:12:00</span></td><td class="v"><span style="letter-spacing:0.438px">1,012.60</span></td><td class="c"><span style="letter-spacing:0.333px">mmHg</span></td><td class="c"><span class="g"><span style="letter-spacing:0.438px">1,012.73</span></span><span style="letter-spacing:0.317px"> mmHg</span></td><td></td></tr>
</table>

<div class="btn" style="left:429px;width:148px">Advance Search</div>
<div class="btn" style="left:587px;width:148px">Download in Word</div>
<div class="btn" style="left:746px;width:148px">Download in Excel</div>
<div class="btn" style="left:905px;width:68px">Close</div>
<div id="foot" class="abs"><b><span style="letter-spacing:0.079px">copyright @ Central Pollution Control Board. All Rights Reserved.</span></b></div>
<div class="abs" style="left:878px;top:734px;width:1px;height:11px;background:#6a9ee0"></div>
<div class="abs" style="left:885px;top:730px;font-family:'Liberation Serif',serif;font-size:13px;line-height:16px;color:#2160c4;white-space:nowrap"><span style="letter-spacing:0.6px">Disclamer</span></div>
<div class="abs" style="left:300px;top:97px;width:3px;height:2px;background:#1d55b8;border-radius:0 0 1px 1px"></div><div class="abs" style="left:308px;top:97px;width:2px;height:2px;background:#1d55b8"></div>

</body></html>
